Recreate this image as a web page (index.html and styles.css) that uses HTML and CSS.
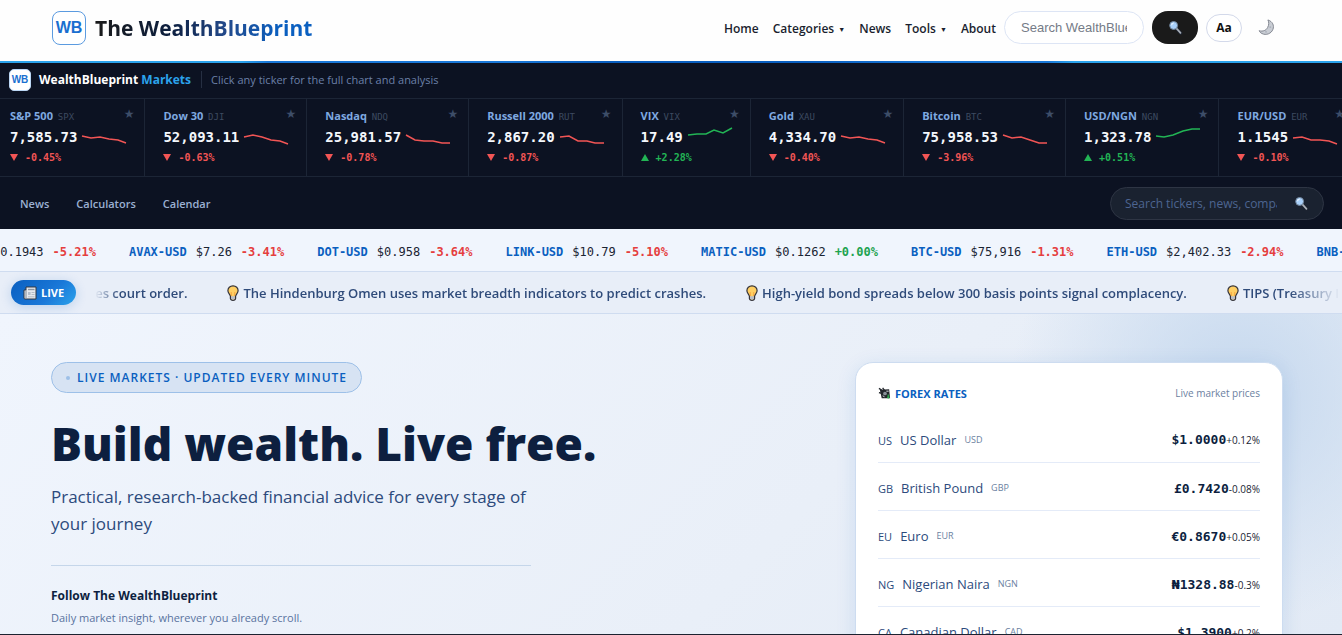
FILE: index.html
```html
<!DOCTYPE html>
<html lang="en">
<head>
  <meta charset="UTF-8" />
  <meta name="viewport" content="width=device-width, initial-scale=1.0" />
  <title>The WealthBlueprint</title>
  <link rel="stylesheet" href="styles.css">
</head>
<body>

  <svg class="sprite" aria-hidden="true">
    <symbol id="icon-search" viewBox="0 0 16 16">
      <path d="M8.5 8.5 L13.5 14" stroke="#1e2430" stroke-width="3.4" stroke-linecap="round"/>
      <path d="M9 9 L13.3 13.7" stroke="#a9afb8" stroke-width="1.8" stroke-linecap="round"/>
      <circle cx="6" cy="5.8" r="4.2" fill="#a9d0fa" stroke="#6f8298" stroke-width="1"/>
      <path d="M3.7 5.6 Q4 3.6 6 3.4" fill="none" stroke="#e4f1ff" stroke-width="1.3"/>
    </symbol>
    <symbol id="icon-bulb" viewBox="0 0 12 16">
      <path d="M6 .8 C2.9.8.9 3 .9 5.7 C.9 8 3 9.2 3.4 11.2 L3.4 13.4 Q3.6 15.3 6 15.3 Q8.4 15.3 8.6 13.4 L8.6 11.2 C9 9.2 11.1 8 11.1 5.7 C11.1 3 9.1.8 6 .8Z" fill="#ffcf63" stroke="#33333b" stroke-width="1.2"/>
      <path d="M4 11.2 H8 V13.6 Q7.6 14.7 6 14.7 Q4.4 14.7 4 13.6Z" fill="#b9bec8"/>
      <path d="M4.4 11 L4.2 7 M7.6 11 L7.8 7" stroke="#f29b38" stroke-width=".8"/>
    </symbol>
  </svg>

  <header class="site-header">
    <a class="brand" href="#">
      <span class="logo">WB</span>
      <span class="brand-name">The WealthBlueprint</span>
    </a>
    <div class="header-right">
      <nav class="main-nav">
        <a href="#">Home</a>
        <a href="#">Categories <span class="caret">▼</span></a>
        <a href="#">News</a>
        <a href="#">Tools <span class="caret">▼</span></a>
        <a href="#">About</a>
      </nav>
      <form class="site-search">
        <input type="text" placeholder="Search WealthBlueprint" aria-label="Search WealthBlueprint">
        <button type="button" class="search-btn" aria-label="Search"><svg class="icon"><use href="#icon-search"/></svg></button>
      </form>
      <button type="button" class="font-btn">Aa</button>
      <button type="button" class="theme-btn" aria-label="Toggle theme">
        <svg class="moon" viewBox="0 0 18 18">
          <path d="M10.5 1 C15.5 2.6 17.4 7 15.8 11 C14 15.6 8.5 17.6 4.2 15.4 C2.8 14.7 1.6 13.6 1.2 12.4 C5.4 13.6 8.6 12 10.2 9 C11.6 6.4 11.8 3.6 10.5 1Z" fill="#c9cdd4" stroke="#7d828c" stroke-width="1"/>
          <circle cx="13" cy="8.6" r="1" fill="#aab0ba"/>
          <circle cx="8.5" cy="13.6" r="1" fill="#aab0ba"/>
        </svg>
      </button>
    </div>
  </header>

  <section class="markets">
    <div class="markets-head">
      <span class="logo logo-small">WB</span>
      <span class="markets-title">WealthBlueprint <em>Markets</em></span>
      <span class="markets-note">Click any ticker for the full chart and analysis</span>
    </div>

    <div class="tickers">
      <div class="ticker down">
        <div class="ticker-name">S&amp;P 500 <small>SPX</small></div>
        <button type="button" class="star" aria-label="Watch S&amp;P 500">★</button>
        <div class="ticker-row"><span class="price">7,585.73</span><svg class="spark" viewBox="0 0 44 18"><polyline points="0,8 9,10 18,9 27,11 36,12 44,15"/></svg></div>
        <div class="change"><i></i>-0.45%</div>
      </div>
      <div class="ticker down">
        <div class="ticker-name">Dow 30 <small>DJI</small></div>
        <button type="button" class="star" aria-label="Watch Dow 30">★</button>
        <div class="ticker-row"><span class="price">52,093.11</span><svg class="spark" viewBox="0 0 44 18"><polyline points="0,9 9,7 18,9 27,12 36,13 44,16"/></svg></div>
        <div class="change"><i></i>-0.63%</div>
      </div>
      <div class="ticker down">
        <div class="ticker-name">Nasdaq <small>NDQ</small></div>
        <button type="button" class="star" aria-label="Watch Nasdaq">★</button>
        <div class="ticker-row"><span class="price">25,981.57</span><svg class="spark" viewBox="0 0 44 18"><polyline points="0,7 9,12 18,13 27,13 36,15 44,15"/></svg></div>
        <div class="change"><i></i>-0.78%</div>
      </div>
      <div class="ticker down">
        <div class="ticker-name">Russell 2000 <small>RUT</small></div>
        <button type="button" class="star" aria-label="Watch Russell 2000">★</button>
        <div class="ticker-row"><span class="price">2,867.20</span><svg class="spark" viewBox="0 0 44 18"><polyline points="0,9 9,8 18,13 27,13 35,15 44,15"/></svg></div>
        <div class="change"><i></i>-0.87%</div>
      </div>
      <div class="ticker up">
        <div class="ticker-name">VIX <small>VIX</small></div>
        <button type="button" class="star" aria-label="Watch VIX">★</button>
        <div class="ticker-row"><span class="price">17.49</span><svg class="spark" viewBox="0 0 44 18"><polyline points="0,7 9,6 18,6 26,2 35,5 44,0"/></svg></div>
        <div class="change"><i></i>+2.28%</div>
      </div>
      <div class="ticker down">
        <div class="ticker-name">Gold <small>XAU</small></div>
        <button type="button" class="star" aria-label="Watch Gold">★</button>
        <div class="ticker-row"><span class="price">4,334.70</span><svg class="spark" viewBox="0 0 44 18"><polyline points="0,8 9,10 18,9 27,11 36,12 44,15"/></svg></div>
        <div class="change"><i></i>-0.40%</div>
      </div>
      <div class="ticker down">
        <div class="ticker-name">Bitcoin <small>BTC</small></div>
        <button type="button" class="star" aria-label="Watch Bitcoin">★</button>
        <div class="ticker-row"><span class="price">75,958.53</span><svg class="spark" viewBox="0 0 44 18"><polyline points="0,7 9,10 18,9 27,12 36,15 44,15"/></svg></div>
        <div class="change"><i></i>-3.96%</div>
      </div>
      <div class="ticker up">
        <div class="ticker-name">USD/NGN <small>NGN</small></div>
        <button type="button" class="star" aria-label="Watch USD/NGN">★</button>
        <div class="ticker-row"><span class="price">1,323.78</span><svg class="spark" viewBox="0 0 44 18"><polyline points="0,8 8,9 17,7 27,3 36,1 44,1"/></svg></div>
        <div class="change"><i></i>+0.51%</div>
      </div>
      <div class="ticker down">
        <div class="ticker-name">EUR/USD <small>EUR</small></div>
        <button type="button" class="star" aria-label="Watch EUR/USD">★</button>
        <div class="ticker-row"><span class="price">1.1545</span><svg class="spark" viewBox="0 0 44 18"><polyline points="0,10 9,9 18,12 27,12 36,13 44,16"/></svg></div>
        <div class="change"><i></i>-0.10%</div>
      </div>
    </div>

    <div class="markets-foot">
      <nav class="markets-nav">
        <a href="#">News</a>
        <a href="#">Calculators</a>
        <a href="#">Calendar</a>
      </nav>
      <form class="markets-search">
        <input type="text" placeholder="Search tickers, news, companies" aria-label="Search tickers">
        <button type="button" aria-label="Search"><svg class="icon"><use href="#icon-search"/></svg></button>
      </form>
    </div>
  </section>

  <div class="crypto-bar">
    <div class="crypto-track">
      <span class="coin"><span>$0.1943</span><strong class="neg">-5.21%</strong></span>
      <span class="coin"><b>AVAX-USD</b><span>$7.26</span><strong class="neg">-3.41%</strong></span>
      <span class="coin"><b>DOT-USD</b><span>$0.958</span><strong class="neg">-3.64%</strong></span>
      <span class="coin"><b>LINK-USD</b><span>$10.79</span><strong class="neg">-5.10%</strong></span>
      <span class="coin"><b>MATIC-USD</b><span>$0.1262</span><strong class="pos">+0.00%</strong></span>
      <span class="coin"><b>BTC-USD</b><span>$75,916</span><strong class="neg">-1.31%</strong></span>
      <span class="coin"><b>ETH-USD</b><span>$2,402.33</span><strong class="neg">-2.94%</strong></span>
      <span class="coin"><b>BNB-USD</b></span>
    </div>
  </div>

  <div class="news-bar">
    <span class="live-badge">
      <svg viewBox="0 0 14 14">
        <path d="M3 1 H13 V13 H2 Q1 13 1 12 V4 H3Z" fill="#e6e9ee" stroke="#33373f" stroke-width="1"/>
        <path d="M3 4 V12" stroke="#7f8894" stroke-width="1"/>
        <path d="M5 3.5 H11.5" stroke="#8c96a3" stroke-width="1.4"/>
        <path d="M8.5 6.5 H11.5 M8.5 8.5 H11.5 M5 10.8 H11.5" stroke="#a8b0bb" stroke-width=".8"/>
        <rect x="5" y="6" width="2.6" height="3" fill="#b4bfcc"/>
      </svg>
      LIVE
    </span>
    <div class="news-window">
      <div class="news-track">
        <span>es court order.</span>
        <span><svg class="bulb"><use href="#icon-bulb"/></svg>The Hindenburg Omen uses market breadth indicators to predict crashes.</span>
        <span><svg class="bulb"><use href="#icon-bulb"/></svg>High-yield bond spreads below 300 basis points signal complacency.</span>
        <span><svg class="bulb"><use href="#icon-bulb"/></svg>TIPS (Treasury Inflation)</span>
      </div>
    </div>
  </div>

  <main class="hero">
    <div class="hero-text">
      <span class="pill">Live markets · Updated every minute</span>
      <h1>Build wealth. Live free.</h1>
      <p class="lead">Practical, research-backed financial advice for every stage of your journey</p>
      <div class="follow">
        <h2>Follow The WealthBlueprint</h2>
        <p>Daily market insight, wherever you already scroll.</p>
      </div>
    </div>

    <div class="forex">
      <div class="forex-head">
        <h3>
          <svg viewBox="0 0 14 14">
            <path d="M2 3 L12 2.5 L13 12 L4 12Z" fill="#22262c"/>
            <path d="M1 1.5 L5 4 M1 6 L5 7 M5 1 L8 5" stroke="#22262c" stroke-width="1.4"/>
            <circle cx="7.5" cy="7" r="2" fill="#8a9099"/>
            <path d="M5 9.5 L7 10.5 M9 4.5 L11.5 4.5" stroke="#dfe3e8" stroke-width="1"/>
            <path d="M11 8 V12.5 M9.8 11.2 H12.4" stroke="#2fae4e" stroke-width="1.4"/>
          </svg>
          Forex Rates
        </h3>
        <span>Live market prices</span>
      </div>
      <table>
        <tr><th scope="row"><abbr>US</abbr>US Dollar<sup>USD</sup></th><td><b>$1.0000</b>+0.12%</td></tr>
        <tr><th scope="row"><abbr>GB</abbr>British Pound<sup>GBP</sup></th><td><b>£0.7420</b>-0.08%</td></tr>
        <tr><th scope="row"><abbr>EU</abbr>Euro<sup>EUR</sup></th><td><b>€0.8670</b>+0.05%</td></tr>
        <tr><th scope="row"><abbr>NG</abbr>Nigerian Naira<sup>NGN</sup></th><td><b>₦1328.88</b>-0.3%</td></tr>
        <tr><th scope="row"><abbr>CA</abbr>Canadian Dollar<sup>CAD</sup></th><td><b>$1.3900</b>+0.2%</td></tr>
      </table>
    </div>
  </main>

</body>
</html>
```
FILE: styles.css
```css
* {
  box-sizing: border-box;
}
body {
  font-family: 'Segoe UI', 'Open Sans', 'Noto Sans', sans-serif;
  margin: 0;
  height: 100vh;
  overflow: hidden;
  display: flex;
  flex-direction: column;
  background: #eff4fc;
  border-bottom: 1px solid #1c2230;
  color: #0d1f3f;
}
a {
  color: inherit;
  text-decoration: none;
}
button, input {
  font-family: inherit;
  margin: 0;
}
button {
  cursor: pointer;
}
.sprite {
  display: none;
}
.icon {
  width: 15px;
  height: 15px;
  display: block;
}

/* top header */
.site-header {
  display: flex;
  justify-content: space-between;
  align-items: flex-start;
  flex: none;
  height: 63px;
  padding: 11px 59px 0 52px;
  background: #fefefe;
  border-bottom: 2px solid;
  border-image: linear-gradient(90deg, #2ba3ec 0 18%, #1a78d8 20% 38%, #0a5fc0 45% 60%, #1a78d8 70% 78%, #2ba3ec 80%) 1;
}
.brand {
  display: flex;
  align-items: center;
  gap: 9px;
}
.logo {
  display: flex;
  align-items: center;
  justify-content: center;
  width: 34px;
  height: 34px;
  border: 1px solid #5b9be0;
  border-radius: 8px;
  background: #fff;
  color: #1a6fd0;
  font: bold 16px 'Liberation Sans', Arial, sans-serif;
}
.logo-small {
  width: 22px;
  height: 22px;
  border-radius: 5px;
  border-color: #bcd7f5;
  font-size: 10px;
}
.brand-name {
  font-size: 21px;
  line-height: 34px;
  font-weight: 700;
  background: linear-gradient(90deg, #1a1a1a, #0d1f3f 35%, #23498a 60%, #0a5fc0 85%);
  -webkit-background-clip: text;
  background-clip: text;
  color: transparent;
}
.header-right {
  display: flex;
  align-items: center;
  gap: 8px;
}
.main-nav {
  display: flex;
  gap: 14px;
  padding-top: 2px;
  font-size: 12px;
  font-weight: 600;
  color: #1a1f2e;
}
.caret {
  font-size: 7px;
  vertical-align: 1px;
  margin-left: 1px;
}
.site-search {
  display: flex;
  gap: 8px;
}
.site-search input {
  width: 140px;
  height: 33px;
  padding: 0 16px;
  border: 1px solid #dde5f5;
  border-radius: 17px;
  background: #fff;
  font: 13px 'Liberation Sans', Arial, sans-serif;
}
.site-search input::placeholder {
  color: #757b87;
}
.search-btn {
  display: flex;
  align-items: center;
  justify-content: center;
  width: 46px;
  height: 33px;
  border: none;
  border-radius: 16px;
  background: #1a1a1a;
}
.font-btn {
  width: 36px;
  height: 28px;
  padding: 0;
  border: 1px solid #d3d9ea;
  border-radius: 14px;
  background: #fff;
  color: #111;
  font-size: 12px;
  font-weight: 700;
}
.theme-btn {
  padding: 0 8px;
  border: none;
  background: none;
}
.moon {
  display: block;
  width: 17px;
  height: 17px;
}

/* markets panel */
.markets {
  flex: none;
  background: #0c1222;
}
.markets-head {
  display: flex;
  align-items: center;
  height: 35px;
  padding: 0 9px 2px;
}
.markets-title {
  margin-left: 8px;
  padding-right: 10px;
  border-right: 1px solid #262f42;
  font-size: 12px;
  font-weight: 700;
  color: #fff;
}
.markets-title em {
  font-style: normal;
  color: #2ba3ec;
}
.markets-note {
  margin-left: 9px;
  font-size: 11px;
  font-weight: 500;
  color: #6b80a8;
}
.tickers {
  display: flex;
  overflow: hidden;
  border-top: 1px solid #1c2536;
  border-bottom: 1px solid #1c2536;
}
.ticker {
  position: relative;
  flex: none;
  height: 77px;
  padding: 8px 18px 0;
  border-right: 1px solid #1c2536;
  font-family: 'DejaVu Sans Mono', monospace;
}
.ticker:first-child {
  padding-left: 10px;
}
.ticker-name {
  font: 700 11px/18px 'Segoe UI', 'Open Sans', sans-serif;
  color: #7fa9e0;
}
.ticker-name small {
  margin-left: 2px;
  font: 9px 'DejaVu Sans Mono', monospace;
  color: #3d4a60;
}
.star {
  position: absolute;
  top: 8px;
  right: 10px;
  padding: 0;
  border: none;
  background: none;
  color: #3d4d68;
  font: 12px/14px 'DejaVu Sans', sans-serif;
}
.ticker-row {
  display: flex;
  align-items: center;
  gap: 5px;
  height: 23px;
}
.price {
  font-size: 14px;
  font-weight: 700;
  color: #f4f7fc;
}
.spark {
  width: 44px;
  height: 18px;
  overflow: visible;
}
.spark polyline {
  fill: none;
  stroke: currentColor;
  stroke-width: 1.5;
}
.change {
  display: flex;
  align-items: center;
  gap: 7px;
  height: 18px;
  font-size: 10px;
  font-weight: 600;
}
.change i {
  border: 4px solid transparent;
  border-bottom: none;
  border-top: 7px solid currentColor;
}
.up .change i {
  border-top: none;
  border-bottom: 7px solid currentColor;
}
.down .change, .down .spark {
  color: #f25555;
}
.up .change, .up .spark {
  color: #22b455;
}
.markets-foot {
  display: flex;
  align-items: center;
  justify-content: space-between;
  height: 52px;
  padding: 0 18px 0 20px;
}
.markets-nav {
  display: flex;
  gap: 27px;
  font-size: 11px;
  font-weight: 600;
  color: #9bb0d2;
}
.markets-search {
  display: flex;
  align-items: center;
  width: 214px;
  height: 33px;
  padding: 0 14px;
  border: 1px solid #2e3544;
  border-radius: 17px;
  background: #1a2230;
}
.markets-search input {
  flex: 1;
  min-width: 0;
  margin-right: 17px;
  padding: 0;
  border: none;
  background: none;
  font-size: 12px;
}
.markets-search input::placeholder {
  color: #4d6590;
}
.markets-search button {
  padding: 0;
  border: none;
  background: none;
}

/* crypto prices strip */
.crypto-bar {
  flex: none;
  height: 43px;
  overflow: hidden;
  background: #f0f5fd;
  border-bottom: 1px solid #cfdcf0;
}
.crypto-track {
  display: flex;
  gap: 33px;
  width: max-content;
  margin-left: -7px;
  font: 12px/46px 'DejaVu Sans Mono', monospace;
  color: #1a2433;
}
.coin {
  display: flex;
  gap: 9px;
}
.coin b {
  color: #0a5fc0;
}
.neg {
  color: #e53e3e;
}
.pos {
  color: #1ea350;
}

/* live headlines strip */
.news-bar {
  display: flex;
  align-items: center;
  flex: none;
  gap: 19px;
  height: 42px;
  padding: 0 2px 0 11px;
  background: #e8eef8;
  border-bottom: 1px solid #cfdcf0;
}
.live-badge {
  display: flex;
  align-items: center;
  gap: 4px;
  flex: none;
  height: 25px;
  padding: 0 12px;
  border-radius: 13px;
  background: linear-gradient(135deg, #0a5fc0, #1a78d8 60%, #2ba3ec);
  box-shadow: 0 2px 12px rgba(10, 95, 192, 0.2);
  color: #fff;
  font-size: 11px;
  font-weight: 700;
}
.live-badge svg {
  width: 14px;
  height: 14px;
}
.news-window {
  flex: 1;
  overflow: hidden;
  -webkit-mask-image: linear-gradient(90deg, transparent, #000 24px calc(100% - 50px), transparent);
  mask-image: linear-gradient(90deg, transparent, #000 24px calc(100% - 50px), transparent);
}
.news-track {
  display: flex;
  gap: 40px;
  width: max-content;
  font-size: 13px;
  font-weight: 600;
  color: #2f4b7a;
}
.news-track span {
  display: flex;
  align-items: center;
}
.bulb {
  width: 12px;
  height: 16px;
  margin-right: 4px;
}

/* hero */
.hero {
  display: flex;
  justify-content: space-between;
  flex: 1;
  min-height: 0;
  padding: 48px 59px 0 51px;
  overflow: hidden;
  background:
    radial-gradient(circle at 1240px 80px, #c5d8ee, rgba(197, 216, 238, 0) 230px),
    linear-gradient(135deg, #f0f5fd, #e9eff8 60%, #e2eaf5);
}
.pill {
  display: inline-flex;
  align-items: center;
  gap: 7px;
  height: 31px;
  padding: 0 14px;
  border: 1px solid #9dc0e8;
  border-radius: 16px;
  background: #d7e3f3;
  color: #0a5fc0;
  font-size: 12px;
  font-weight: 600;
  letter-spacing: 1px;
  text-transform: uppercase;
}
.pill::before {
  content: '';
  width: 4px;
  height: 4px;
  border-radius: 50%;
  background: #9dc0e8;
}
.hero-text {
  width: 600px;
}
h1 {
  margin: 22px 0 0;
  font-size: 46px;
  line-height: 56px;
  font-weight: 800;
}
.lead {
  width: 480px;
  margin: 12px 0 0;
  font-size: 17px;
  line-height: 27px;
  color: #2c4a7c;
}
.follow {
  width: 480px;
  margin-top: 28px;
  padding-top: 20px;
  border-top: 1px solid #c5d6ea;
}
.follow h2 {
  margin: 0;
  font-size: 12px;
  line-height: 20px;
}
.follow p {
  margin: 2px 0 0;
  font-size: 11px;
  line-height: 20px;
  color: #5a73a0;
}
.forex {
  align-self: flex-start;
  width: 428px;
  padding: 20px 22px;
  border: 1px solid #cddcf0;
  border-radius: 18px;
  background: #fff;
  box-shadow: 0 4px 20px rgba(10, 95, 192, 0.12);
}
.forex-head {
  display: flex;
  align-items: center;
  justify-content: space-between;
  height: 20px;
  margin-bottom: 11px;
  font-size: 10px;
  color: #6b7f9f;
}
.forex-head h3 {
  display: flex;
  align-items: center;
  gap: 4px;
  margin: 0;
  color: #0a5fc0;
  font-size: 11px;
  text-transform: uppercase;
}
.forex-head svg {
  width: 13px;
  height: 13px;
}
.forex table {
  width: 100%;
  border-collapse: collapse;
}
.forex tr {
  height: 48px;
  border-bottom: 1px solid #e4ebf8;
}
.forex th, .forex td {
  padding: 4px 0 0;
  text-align: left;
  font-size: 13px;
  font-weight: 400;
  color: #2c4a7c;
}
.forex abbr {
  margin-right: 8px;
  font-size: 11px;
}
.forex sup {
  margin-left: 8px;
  font-size: 9px;
  line-height: 9px;
  vertical-align: 2px;
  color: #6b7f9f;
}
.forex td {
  text-align: right;
  font-size: 10px;
  color: #1a2433;
}
.forex td b {
  font: bold 13px 'DejaVu Sans Mono', monospace;
  color: #0d1f3f;
}
```
